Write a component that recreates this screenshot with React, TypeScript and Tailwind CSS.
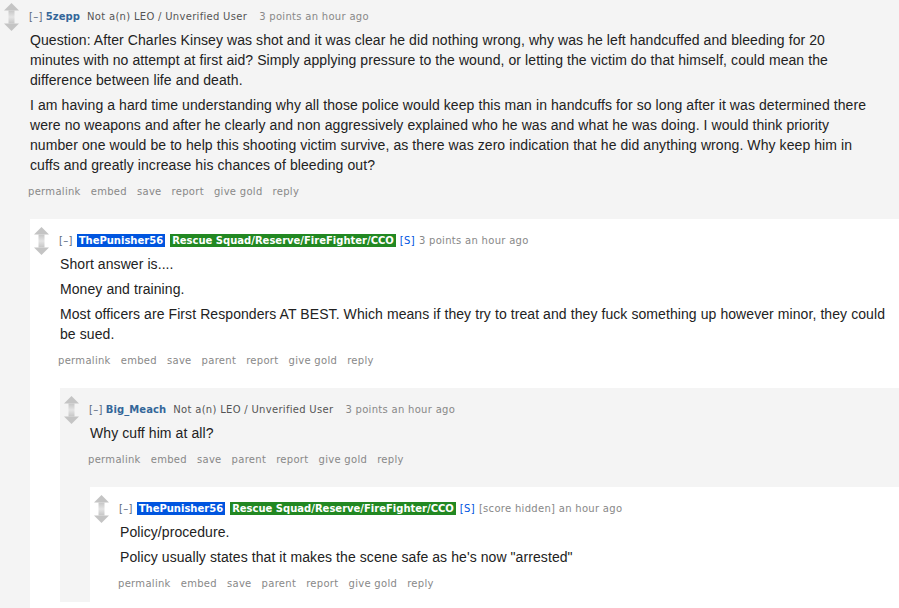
import React, { ReactNode } from "react";

const tagFont = { fontFamily: '"DejaVu Sans", Verdana, sans-serif' };
const bodyFont = { fontFamily: '"Liberation Sans", Arial, Helvetica, sans-serif' };

function Arrows() {
  return (
    <svg width="15" height="28" viewBox="0 0 15 28" className="block">
      <defs>
        <linearGradient id="stemUp" x1="0" y1="0" x2="0" y2="1">
          <stop offset="0" stopColor="#c6c6c6" />
          <stop offset="1" stopColor="#e4e4e4" />
        </linearGradient>
        <linearGradient id="stemDown" x1="0" y1="0" x2="0" y2="1">
          <stop offset="0" stopColor="#e4e4e4" />
          <stop offset="1" stopColor="#c6c6c6" />
        </linearGradient>
      </defs>
      <polygon points="7.5,0 15,7.5 0,7.5" fill="#c4c4c4" />
      <rect x="4.5" y="7.5" width="6" height="6.5" fill="url(#stemUp)" />
      <rect x="4.5" y="14" width="6" height="6.5" fill="url(#stemDown)" />
      <polygon points="0,20.5 15,20.5 7.5,28" fill="#c4c4c4" />
    </svg>
  );
}

function UserTagline({ user, score }: { user: string; score: string }) {
  return (
    <div className="text-[10px] leading-[14px] tracking-[0.3px] whitespace-nowrap" style={tagFont}>
      <span className="text-[#5a6a80]">[–]</span>
      <span className="ml-[3px] font-bold text-[#336699] tracking-[0.1px]">{user}</span>
      <span className="ml-[7px] text-[#545454]">Not a(n) LEO / Unverified User</span>
      <span className="ml-[12px] text-[#888888]">{score}</span>
    </div>
  );
}

function BadgeTagline({ score }: { score: string }) {
  return (
    <div className="text-[10px] leading-[14px] tracking-[0.3px] whitespace-nowrap" style={tagFont}>
      <span className="text-[#5a6a80]">[–]</span>
      <span className="ml-[4px] inline-block px-[2px] leading-[13px] tracking-normal bg-[#0055df] text-white font-bold">
        ThePunisher56
      </span>
      <span className="ml-[5px] inline-block px-[2px] leading-[13px] tracking-normal bg-[#228822] text-white font-bold">
        Rescue Squad/Reserve/FireFighter/CCO
      </span>
      <span className="ml-[4px] text-[#0055df]">[S]</span>
      <span className="ml-[4px] text-[#888888]">{score}</span>
    </div>
  );
}

function Comment({
  tagline,
  paras,
  buttons,
  children,
  bg,
  top,
  pb,
}: {
  tagline: ReactNode;
  paras: string[];
  buttons: string[];
  children?: ReactNode;
  bg: string;
  top?: boolean;
  pb: string;
}) {
  return (
    <div className={`${bg} ${top ? "pt-[3px]" : "pt-[8px]"} ${pb}`}>
      <div className="flex">
        <div className="w-[29px] shrink-0 pl-[4px]">
          <Arrows />
        </div>
        <div className="flex-1 min-w-0">
          <div className="mt-[7px]">{tagline}</div>
          <div
            className="mt-[6px] pl-[1px] max-w-[840px] flex flex-col gap-[5px] text-[14px] leading-[20px] tracking-[0.08px] text-[#222222]"
            style={bodyFont}
          >
            {paras.map((p, i) => (
              <p key={i}>{p}</p>
            ))}
          </div>
          <div
            className="mt-[10px] -ml-[1px] flex gap-[10px] text-[10px] leading-[14px] tracking-[0.3px] text-[#888888] whitespace-nowrap"
            style={tagFont}
          >
            {buttons.map((b) => (
              <span key={b}>{b}</span>
            ))}
          </div>
        </div>
      </div>
      {children && <div className="mt-[20px] pl-[30px]">{children}</div>}
    </div>
  );
}

export default function App() {
  const b1 = ["permalink", "embed", "save", "report", "give gold", "reply"];
  const b2 = ["permalink", "embed", "save", "parent", "report", "give gold", "reply"];
  return (
    <div className="w-[899px] h-[608px] overflow-hidden bg-[#f4f4f4]">
      <Comment
        top
        bg="bg-[#f4f4f4]"
        pb="pb-[10px]"
        tagline={<UserTagline user="5zepp" score="3 points an hour ago" />}
        paras={[
          "Question: After Charles Kinsey was shot and it was clear he did nothing wrong, why was he left handcuffed and bleeding for 20 minutes with no attempt at first aid? Simply applying pressure to the wound, or letting the victim do that himself, could mean the difference between life and death.",
          "I am having a hard time understanding why all those police would keep this man in handcuffs for so long after it was determined there were no weapons and after he clearly and non aggressively explained who he was and what he was doing. I would think priority number one would be to help this shooting victim survive, as there was zero indication that he did anything wrong. Why keep him in cuffs and greatly increase his chances of bleeding out?",
        ]}
        buttons={b1}
      >
        <Comment
          bg="bg-white"
          pb="pb-[10px]"
          tagline={<BadgeTagline score="3 points an hour ago" />}
          paras={[
            "Short answer is....",
            "Money and training.",
            "Most officers are First Responders AT BEST. Which means if they try to treat and they fuck something up however minor, they could be sued.",
          ]}
          buttons={b2}
        >
          <Comment
            bg="bg-[#f4f4f4]"
            pb="pb-0"
            tagline={<UserTagline user="Big_Meach" score="3 points an hour ago" />}
            paras={["Why cuff him at all?"]}
            buttons={b2}
          >
            <Comment
              bg="bg-white"
              pb="pb-[11px]"
              tagline={<BadgeTagline score="[score hidden] an hour ago" />}
              paras={[
                "Policy/procedure.",
                'Policy usually states that it makes the scene safe as he\'s now "arrested"',
              ]}
              buttons={b2}
            />
          </Comment>
        </Comment>
      </Comment>
    </div>
  );
}
